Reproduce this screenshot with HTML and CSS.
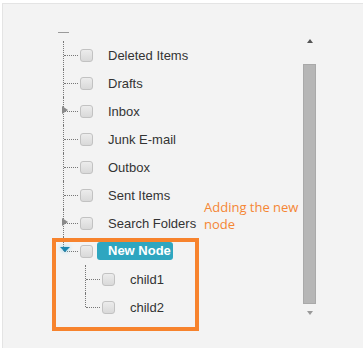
FILE: index.html
```html
<!DOCTYPE html>
<html lang="en">
<head>
    <meta charset="UTF-8">
    <meta name="viewport" content="width=device-width, initial-scale=1.0">
    <title>Tree View</title>
    <link rel="stylesheet" href="styles.css">
</head>
<body>
    <div class="panel">
        <div class="tree-wrap">
            <div class="root-dash"></div>
            <ul class="tree">
                <li><div class="row"><span class="check"></span><span class="label">Deleted Items</span></div></li>
                <li><div class="row"><span class="check"></span><span class="label">Drafts</span></div></li>
                <li><span class="toggle"></span><div class="row"><span class="check"></span><span class="label">Inbox</span></div></li>
                <li><div class="row"><span class="check"></span><span class="label">Junk E-mail</span></div></li>
                <li><div class="row"><span class="check"></span><span class="label">Outbox</span></div></li>
                <li><div class="row"><span class="check"></span><span class="label">Sent Items</span></div></li>
                <li><span class="toggle"></span><div class="row"><span class="check"></span><span class="label">Search Folders</span></div></li>
                <li>
                    <span class="toggle open"></span>
                    <div class="row"><span class="check"></span><span class="label chip">New Node</span></div>
                    <ul class="tree children">
                        <li><div class="row"><span class="check"></span><span class="label">child1</span></div></li>
                        <li><div class="row"><span class="check"></span><span class="label">child2</span></div></li>
                    </ul>
                </li>
            </ul>
        </div>

        <div class="scrollbar">
            <span class="arrow up"></span>
            <div class="thumb"></div>
            <span class="arrow down"></span>
        </div>

        <!-- annotation overlay -->
        <div class="highlight-box"></div>
        <p class="note">Adding the new<br>node</p>
    </div>
</body>
</html>
```

FILE: styles.css
```css
body {
    margin: 0;
    background-color: #fff;
    font-family: 'Liberation Sans', Arial, sans-serif;
    font-size: 13px;
    color: #333;
}

.panel {
    position: relative;
    display: flex;
    height: 344px;
    margin: 3px 0 0 2px;
    border-top: 1px solid #e4e4e4;
    border-left: 1px solid #e4e4e4;
    background-color: #f3f3f3;
}

.tree-wrap {
    flex: 1;
    padding: 28px 0 0 60px;
}

.root-dash {
    width: 11px;
    height: 1px;
    margin: 0 0 8px -5px;
    background-color: #9a9a9a;
}

.tree {
    list-style: none;
    margin: 0;
    padding: 0;
}

.tree li {
    position: relative;
}

.tree li::before {
    content: "";
    position: absolute;
    left: 0;
    top: 0;
    bottom: 0;
    border-left: 1px dotted #777;
}

.tree li:last-child::before {
    bottom: auto;
    height: 14px;
}

.tree li::after {
    content: "";
    position: absolute;
    left: 1px;
    top: 14px;
    width: 14px;
    border-top: 1px dotted #777;
}

.children {
    padding-left: 22px;
}

.row {
    display: flex;
    align-items: center;
    height: 28px;
    padding-left: 17px;
}

.check {
    width: 11px;
    height: 11px;
    border: 1px solid #c2c2c2;
    border-radius: 3px;
    background: linear-gradient(#ececec, #d9d9d9);
    margin-right: 15px;
    flex-shrink: 0;
}

.label {
    white-space: nowrap;
}

.chip {
    margin-left: -11px;
    padding: 0 2px 0 11px;
    height: 18px;
    line-height: 18px;
    border-radius: 3px;
    background-color: #2ea6c0;
    color: #fff;
    font-weight: 700;
}

.toggle {
    position: absolute;
    z-index: 1;
    left: -1px;
    top: 9px;
    width: 0;
    height: 0;
    border-left: 6px solid #8a8a8a;
    border-top: 4.5px solid transparent;
    border-bottom: 4.5px solid transparent;
}

.toggle.open {
    left: -3px;
    top: 10px;
    border-left: 5px solid transparent;
    border-right: 5px solid transparent;
    border-top: 5px solid #1c86b0;
    border-bottom: 0;
    filter: drop-shadow(0 0 2px #7fd0ee);
}

.scrollbar {
    display: flex;
    flex-direction: column;
    align-items: center;
    width: 13px;
    margin-right: 47px;
    padding-top: 35px;
}

.arrow {
    width: 0;
    height: 0;
    border-left: 3.5px solid transparent;
    border-right: 3.5px solid transparent;
}

.arrow.up {
    border-bottom: 4px solid #555;
}

.thumb {
    width: 11px;
    height: 238px;
    margin: 21px 0 7px;
    border: 1px solid #a9a9a9;
    background-color: #b6b6b6;
}

.arrow.down {
    border-top: 4px solid #999;
}

.highlight-box {
    position: absolute;
    left: 49px;
    top: 234px;
    width: 139px;
    height: 85px;
    border: 4px solid #f7832d;
}

.note {
    position: absolute;
    left: 201px;
    top: 195px;
    margin: 0;
    font-family: 'Open Sans', sans-serif;
    font-size: 13px;
    line-height: 17px;
    color: #f58634;
}
```
